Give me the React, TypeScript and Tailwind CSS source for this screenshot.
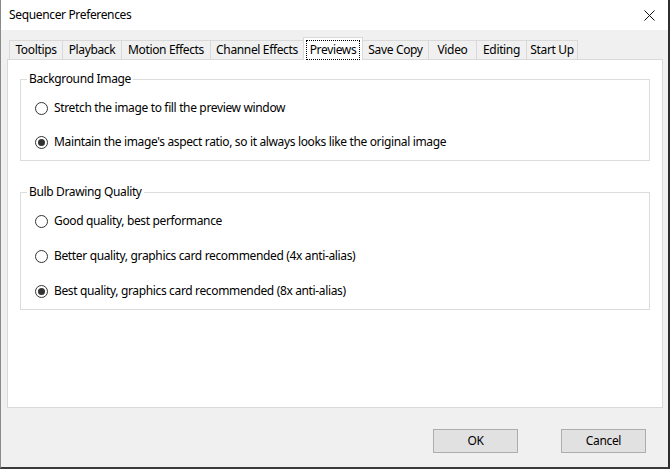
import React from 'react';

const tabs = [
  { label: 'Tooltips', width: 'w-[53px]' },
  { label: 'Playback', width: 'w-[59px]' },
  { label: 'Motion Effects', width: 'w-[89px]' },
  { label: 'Channel Effects', width: 'w-[93px]' },
  { label: 'Previews', width: 'w-[60px]', selected: true },
  { label: 'Save Copy', width: 'w-[65px]' },
  { label: 'Video', width: 'w-[48px]' },
  { label: 'Editing', width: 'w-[50px]' },
  { label: 'Start Up', width: 'w-[52px]' },
];

function Radio({ label, checked }: { label: string; checked?: boolean }) {
  return (
    <div className="flex h-[20px] items-center">
      <span className="ml-[14px] flex h-[13px] w-[13px] items-center justify-center rounded-full border border-[#333333] bg-white">
        {checked ? <span className="h-[7px] w-[7px] rounded-full bg-[#333333]" /> : null}
      </span>
      <span className="ml-[6px]">{label}</span>
    </div>
  );
}

function Group({
  title,
  children,
  className,
  gap,
}: {
  title: string;
  children: React.ReactNode;
  className?: string;
  gap: string;
}) {
  return (
    <fieldset className={`mx-[12px] border border-[#dcdcdc] px-0 pb-[8px] pt-[11px] ${className ?? ''}`}>
      <legend className="ml-[6px] px-[2px] leading-[16px]">{title}</legend>
      <div className={`flex flex-col ${gap}`}>{children}</div>
    </fieldset>
  );
}

export default function App() {
  return (
    <div
      className="flex h-[469px] w-[670px] flex-col border-b-2 border-l border-r-2 border-b-[#3a3a3a] border-l-[#8a8a8a] border-r-[#2e2e2e] bg-[#f0f0f0] text-[12px] tracking-[-0.35px] text-black"
      style={{ fontFamily: '"Segoe UI", "Noto Sans", sans-serif' }}
    >
      <div className="flex h-[30px] shrink-0 items-center justify-between bg-white pl-[8px] pr-[9px]">
        <span>Sequencer Preferences</span>
        <svg width="11" height="11" viewBox="0 0 11 11" className="mr-[4px]">
          <path d="M0.5 0.5 L10.5 10.5 M10.5 0.5 L0.5 10.5" stroke="#111" strokeWidth="1" />
        </svg>
      </div>

      <div className="flex flex-1 flex-col pl-[6px] pr-[5px] pt-[7px]">
        <div className="flex h-[22px] items-end pl-[2px]">
          {tabs.map((tab, i) => {
            const prevSelected = tabs[i - 1]?.selected;
            if (tab.selected) {
              return (
                <div
                  key={tab.label}
                  className={`relative z-10 -mb-px flex h-[23px] ${tab.width} shrink-0 justify-center border border-b-0 border-[#d9d9d9] bg-white px-[2px] pt-[2px]`}
                >
                  <span className="flex h-[20px] w-full items-center justify-center border border-dotted border-black pb-[1px]">
                    {tab.label}
                  </span>
                </div>
              );
            }
            return (
              <div
                key={tab.label}
                className={`flex h-[19px] ${tab.width} shrink-0 items-center justify-center border-t border-[#d9d9d9] bg-[#f0f0f0] ${
                  prevSelected ? '' : 'border-l'
                } ${i === tabs.length - 1 ? 'border-r' : ''}`}
              >
                {tab.label}
              </div>
            );
          })}
        </div>

        <div className="h-[349px] border border-[#d9d9d9] bg-white pt-[11px]">
          <Group title="Background Image" gap="gap-[14px]">
            <Radio label="Stretch the image to fill the preview window" />
            <Radio label="Maintain the image's aspect ratio, so it always looks like the original image" checked />
          </Group>
          <Group title="Bulb Drawing Quality" className="mt-[23px]" gap="gap-[15px]">
            <Radio label="Good quality, best performance" />
            <Radio label="Better quality, graphics card recommended (4x anti-alias)" />
            <Radio label="Best quality, graphics card recommended (8x anti-alias)" checked />
          </Group>
        </div>

        <div className="mt-[21px] flex justify-end gap-[43px] pr-[17px]">
          <button type="button" className="h-[24px] w-[85px] border border-[#adadad] bg-[#e1e1e1]">
            OK
          </button>
          <button type="button" className="h-[24px] w-[85px] border border-[#adadad] bg-[#e1e1e1]">
            Cancel
          </button>
        </div>
      </div>
    </div>
  );
}
